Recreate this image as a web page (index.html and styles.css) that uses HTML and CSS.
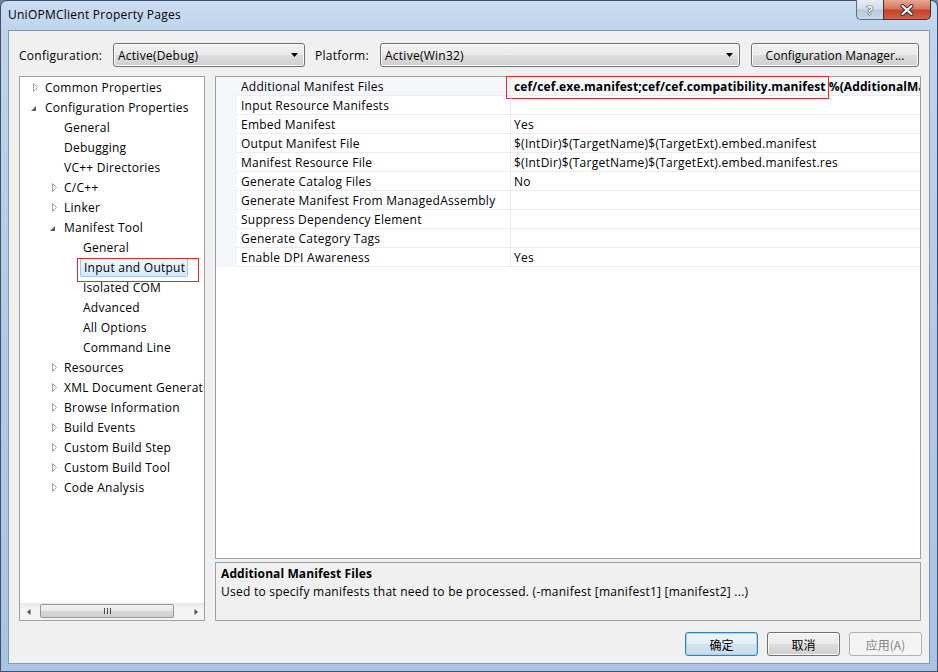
FILE: index.html
```html
<!DOCTYPE html>
<html lang="en">
<head>
    <meta charset="UTF-8">
    <title>UniOPMClient Property Pages</title>
    <link rel="stylesheet" href="styles.css">
</head>
<body>
<div class="window">
    <div class="titlebar">
        <div class="title">UniOPMClient Property Pages</div>
        <div class="caption-btns">
            <div class="cap help">?</div>
            <div class="cap close">
                <svg width="14" height="12" viewBox="0 0 14 12">
                    <path d="M2.5 2 L11.5 10 M11.5 2 L2.5 10" stroke="#3a2322" stroke-width="4" stroke-linecap="round"/>
                    <path d="M2.5 2 L11.5 10 M11.5 2 L2.5 10" stroke="#fff" stroke-width="2.2" stroke-linecap="round"/>
                </svg>
            </div>
        </div>
    </div>

    <div class="client">
        <div class="config-row">
            <span class="lbl lbl-config">Configuration:</span>
            <div class="combo combo-config">
                <span>Active(Debug)</span>
                <svg class="arrow" width="7" height="4" viewBox="0 0 7 4"><path d="M0 0 H7 L3.5 4 Z" fill="#000"/></svg>
            </div>
            <span class="lbl lbl-platform">Platform:</span>
            <div class="combo combo-platform">
                <span>Active(Win32)</span>
                <svg class="arrow" width="7" height="4" viewBox="0 0 7 4"><path d="M0 0 H7 L3.5 4 Z" fill="#000"/></svg>
            </div>
            <button class="btn btn-manager">Configuration Manager...</button>
        </div>

        <div class="main">
            <div class="tree">
                <div class="tree-list">
                    <div class="node l0"><svg class="exp" viewBox="0 0 19 20"><path class="closed" d="M7.5 6.5 L11.5 10.5 L7.5 14.5 Z"/></svg><span class="txt">Common Properties</span></div>
                    <div class="node l0"><svg class="exp" viewBox="0 0 19 20"><path class="open" d="M10 9 L10 14 L5 14 Z"/></svg><span class="txt">Configuration Properties</span></div>
                    <div class="node l1"><span class="exp"></span><span class="txt">General</span></div>
                    <div class="node l1"><span class="exp"></span><span class="txt">Debugging</span></div>
                    <div class="node l1"><span class="exp"></span><span class="txt">VC++ Directories</span></div>
                    <div class="node l1"><svg class="exp" viewBox="0 0 19 20"><path class="closed" d="M7.5 6.5 L11.5 10.5 L7.5 14.5 Z"/></svg><span class="txt">C/C++</span></div>
                    <div class="node l1"><svg class="exp" viewBox="0 0 19 20"><path class="closed" d="M7.5 6.5 L11.5 10.5 L7.5 14.5 Z"/></svg><span class="txt">Linker</span></div>
                    <div class="node l1"><svg class="exp" viewBox="0 0 19 20"><path class="open" d="M10 9 L10 14 L5 14 Z"/></svg><span class="txt">Manifest Tool</span></div>
                    <div class="node l2"><span class="exp"></span><span class="txt">General</span></div>
                    <div class="node l2 selected"><span class="exp"></span><span class="txt">Input and Output</span><span class="annot tree-annot"></span></div>
                    <div class="node l2"><span class="exp"></span><span class="txt">Isolated COM</span></div>
                    <div class="node l2"><span class="exp"></span><span class="txt">Advanced</span></div>
                    <div class="node l2"><span class="exp"></span><span class="txt">All Options</span></div>
                    <div class="node l2"><span class="exp"></span><span class="txt">Command Line</span></div>
                    <div class="node l1"><svg class="exp" viewBox="0 0 19 20"><path class="closed" d="M7.5 6.5 L11.5 10.5 L7.5 14.5 Z"/></svg><span class="txt">Resources</span></div>
                    <div class="node l1"><svg class="exp" viewBox="0 0 19 20"><path class="closed" d="M7.5 6.5 L11.5 10.5 L7.5 14.5 Z"/></svg><span class="txt">XML Document Generator</span></div>
                    <div class="node l1"><svg class="exp" viewBox="0 0 19 20"><path class="closed" d="M7.5 6.5 L11.5 10.5 L7.5 14.5 Z"/></svg><span class="txt">Browse Information</span></div>
                    <div class="node l1"><svg class="exp" viewBox="0 0 19 20"><path class="closed" d="M7.5 6.5 L11.5 10.5 L7.5 14.5 Z"/></svg><span class="txt">Build Events</span></div>
                    <div class="node l1"><svg class="exp" viewBox="0 0 19 20"><path class="closed" d="M7.5 6.5 L11.5 10.5 L7.5 14.5 Z"/></svg><span class="txt">Custom Build Step</span></div>
                    <div class="node l1"><svg class="exp" viewBox="0 0 19 20"><path class="closed" d="M7.5 6.5 L11.5 10.5 L7.5 14.5 Z"/></svg><span class="txt">Custom Build Tool</span></div>
                    <div class="node l1"><svg class="exp" viewBox="0 0 19 20"><path class="closed" d="M7.5 6.5 L11.5 10.5 L7.5 14.5 Z"/></svg><span class="txt">Code Analysis</span></div>
                </div>
                <div class="hscroll">
                    <div class="sb-arrow"><svg width="4" height="6" viewBox="0 0 4 6"><path d="M3.5 0 V6 L0 3 Z" fill="#505050"/></svg></div>
                    <div class="sb-track">
                        <div class="sb-thumb">
                            <svg width="7" height="6" viewBox="0 0 7 6"><path d="M0.5 0 V6 M3.5 0 V6 M6.5 0 V6" stroke="#4a4a4a" stroke-width="1"/></svg>
                        </div>
                    </div>
                    <div class="sb-arrow"><svg width="4" height="6" viewBox="0 0 4 6"><path d="M0.5 0 V6 L4 3 Z" fill="#505050"/></svg></div>
                </div>
            </div>

            <div class="right">
                <div class="grid">
                    <div class="prop sel">
                        <span class="gutter"></span>
                        <span class="pname">Additional Manifest Files</span>
                        <span class="pval bold">cef/cef.exe.manifest;cef/cef.compatibility.manifest %(AdditionalManifestFiles)</span>
                        <span class="annot grid-annot"></span>
                    </div>
                    <div class="prop"><span class="gutter"></span><span class="pname">Input Resource Manifests</span><span class="pval"></span></div>
                    <div class="prop"><span class="gutter"></span><span class="pname">Embed Manifest</span><span class="pval">Yes</span></div>
                    <div class="prop"><span class="gutter"></span><span class="pname">Output Manifest File</span><span class="pval">$(IntDir)$(TargetName)$(TargetExt).embed.manifest</span></div>
                    <div class="prop"><span class="gutter"></span><span class="pname">Manifest Resource File</span><span class="pval">$(IntDir)$(TargetName)$(TargetExt).embed.manifest.res</span></div>
                    <div class="prop"><span class="gutter"></span><span class="pname">Generate Catalog Files</span><span class="pval">No</span></div>
                    <div class="prop"><span class="gutter"></span><span class="pname">Generate Manifest From ManagedAssembly</span><span class="pval"></span></div>
                    <div class="prop"><span class="gutter"></span><span class="pname">Suppress Dependency Element</span><span class="pval"></span></div>
                    <div class="prop"><span class="gutter"></span><span class="pname">Generate Category Tags</span><span class="pval"></span></div>
                    <div class="prop"><span class="gutter"></span><span class="pname">Enable DPI Awareness</span><span class="pval">Yes</span></div>
                </div>
                <div class="desc">
                    <div class="desc-title">Additional Manifest Files</div>
                    <div class="desc-text">Used to specify manifests that need to be processed. (-manifest [manifest1] [manifest2] ...)</div>
                </div>
            </div>
        </div>

        <div class="dlg-buttons">
            <button class="btn btn-default cjk">确定</button>
            <button class="btn cjk">取消</button>
            <button class="btn cjk" disabled>应用(A)</button>
        </div>
    </div>
</div>
</body>
</html>
```

FILE: styles.css
```css
* {
    margin: 0;
    padding: 0;
    box-sizing: border-box;
}

body {
    width: 938px;
    height: 672px;
    overflow: hidden;
    background: #6f849c;
    font-family: "Open Sans", "Noto Sans CJK SC", sans-serif;
    font-size: 12px;
    letter-spacing: 0.25px;
    color: #000;
}

.window {
    width: 938px;
    height: 672px;
    display: flex;
    flex-direction: column;
    padding: 0 7px 7px;
    border: 1px solid #3f5068;
    border-radius: 7px 7px 0 0;
    background: linear-gradient(#cadcf1, #bfd4ec 30px, #b3cbe7 300px, #a9c3e3);
}

/* title bar */
.titlebar {
    height: 29px;
    display: flex;
    align-items: flex-start;
}

.title {
    flex: 1;
    line-height: 27px;
}

.caption-btns {
    display: flex;
    margin-top: -1px;
    margin-right: -1px;
}

.cap {
    height: 20px;
    display: flex;
    align-items: center;
    justify-content: center;
    border: 1px solid #5c6c82;
    border-top: none;
}

.help {
    width: 27px;
    border-right: none;
    border-radius: 0 0 0 5px;
    background: linear-gradient(#e5edf6, #d2deeb 45%, #b9cadd 55%, #c8d7e8);
    color: #fff;
    font-weight: bold;
    font-size: 13px;
    text-shadow: 0 0 1px #333, 0 0 1px #333, 0 0 1px #333;
}

.close {
    width: 48px;
    border-color: #4d2b26;
    border-radius: 0 0 5px 0;
    background: linear-gradient(#e9a897, #d8755f 45%, #c5432a 55%, #d0604a);
}

/* client area */
.client {
    flex: 1;
    min-width: 0;
    display: flex;
    flex-direction: column;
    padding: 12px 8px 7px 10px;
    background: #f0f0f0;
    border: 1px solid #8597ad;
}

.config-row {
    height: 24px;
    display: flex;
    align-items: center;
}

.lbl-config {
    width: 94px;
}

.lbl-platform {
    width: 65px;
    margin-left: 10px;
}

.combo {
    height: 24px;
    display: flex;
    align-items: center;
    justify-content: space-between;
    padding: 0 6px 0 4px;
    border: 1px solid #707070;
    border-radius: 3px;
    background: linear-gradient(#f2f2f2 0%, #ebebeb 50%, #dddddd 50%, #cfcfcf 100%);
    box-shadow: inset 0 0 0 1px #fbfbfb;
}

.combo-config {
    width: 192px;
}

.combo-platform {
    width: 360px;
}

.btn {
    height: 24px;
    font: inherit;
    color: #000;
    border: 1px solid #707070;
    border-radius: 3px;
    background: linear-gradient(#f2f2f2 0%, #ebebeb 50%, #dddddd 50%, #cfcfcf 100%);
    box-shadow: inset 0 0 0 1px #fbfbfb;
}

.btn-manager {
    width: 168px;
    margin-left: 11px;
}

/* tree + grid */
.main {
    height: 545px;
    margin-top: 9px;
    display: flex;
    gap: 10px;
}

.tree {
    width: 186px;
    flex: none;
    display: flex;
    flex-direction: column;
    background: #fff;
    border: 1px solid #a0a0a0;
}

.tree-list {
    flex: 1;
    overflow: hidden;
}

.node {
    position: relative;
    height: 20px;
    display: flex;
    align-items: center;
    white-space: nowrap;
}

.l0 { padding-left: 6px; }
.l1 { padding-left: 25px; }
.l2 { padding-left: 44px; }

.exp {
    width: 19px;
    height: 20px;
    flex: none;
    display: inline-block;
}

.closed {
    fill: #fff;
    stroke: #a3a3a3;
}

.open {
    fill: #5a5a5a;
}

.selected .txt {
    height: 19px;
    line-height: 17px;
    margin-left: -3px;
    padding: 0 2px 0 3px;
    border: 1px solid #a7c6ea;
    border-radius: 2px;
    background: linear-gradient(#f1f7fe, #d6e7fb);
}

.annot {
    position: absolute;
    border: 1px solid #e52b2b;
}

.tree-annot {
    left: 57px;
    top: 1px;
    width: 122px;
    height: 24px;
}

.hscroll {
    height: 17px;
    display: flex;
    background: linear-gradient(#e8e8e8, #f4f4f4 40%, #f4f4f4);
}

.sb-arrow {
    width: 17px;
    display: flex;
    align-items: center;
    justify-content: center;
}

.sb-track {
    flex: 1;
    padding: 1px 3px 0;
}

.sb-thumb {
    width: 134px;
    height: 14px;
    display: flex;
    align-items: center;
    justify-content: center;
    border: 1px solid #979797;
    border-radius: 2px;
    background: linear-gradient(#f3f3f3, #e8e8e8 50%, #d8d8d8 50%, #d0d0d0);
}

.right {
    flex: 1;
    min-width: 0;
    display: flex;
    flex-direction: column;
    gap: 3px;
}

.grid {
    height: 483px;
    background: #fff;
    border: 1px solid #a0a0a0;
}

.prop {
    position: relative;
    height: 19px;
    display: flex;
    line-height: 20px;
    white-space: nowrap;
}

.gutter {
    width: 21px;
    flex: none;
    background: #f3f6fb;
}

.pname {
    width: 274px;
    flex: none;
    padding-left: 4px;
    border-right: 1px solid #ececec;
    border-bottom: 1px solid #ececec;
}

.pval {
    flex: 1;
    min-width: 0;
    overflow: hidden;
    padding-left: 3px;
    border-bottom: 1px solid #ececec;
}

.sel .pname,
.sel .pval {
    background: #f4f6f9;
}

.bold {
    font-weight: bold;
    letter-spacing: 0.1px;
}

.grid-annot {
    left: 290px;
    top: -1px;
    width: 323px;
    height: 23px;
}

.desc {
    flex: 1;
    padding: 2px 5px;
    line-height: 18px;
    border: 1px solid #a0a0a0;
    background: #f0f0f0;
}

.desc-title {
    font-weight: bold;
    letter-spacing: 0.1px;
}

/* dialog buttons */
.dlg-buttons {
    margin-top: 11px;
    display: flex;
    justify-content: flex-end;
    gap: 9px;
    margin-right: -1px;
}

.dlg-buttons .btn {
    width: 73px;
}

.cjk {
    font-family: "Noto Sans CJK SC", sans-serif;
    font-size: 12px;
    letter-spacing: 0;
}

.btn-default {
    border-color: #3c7fb1;
    background: linear-gradient(#eef6fb 0%, #e4eff6 50%, #d3e4ef 50%, #c6dbea 100%);
    box-shadow: inset 0 0 0 1px #9fd5f3;
}

.btn:disabled {
    color: #838383;
    border-color: #adb2b5;
    background: #f4f4f4;
    box-shadow: none;
}
```
